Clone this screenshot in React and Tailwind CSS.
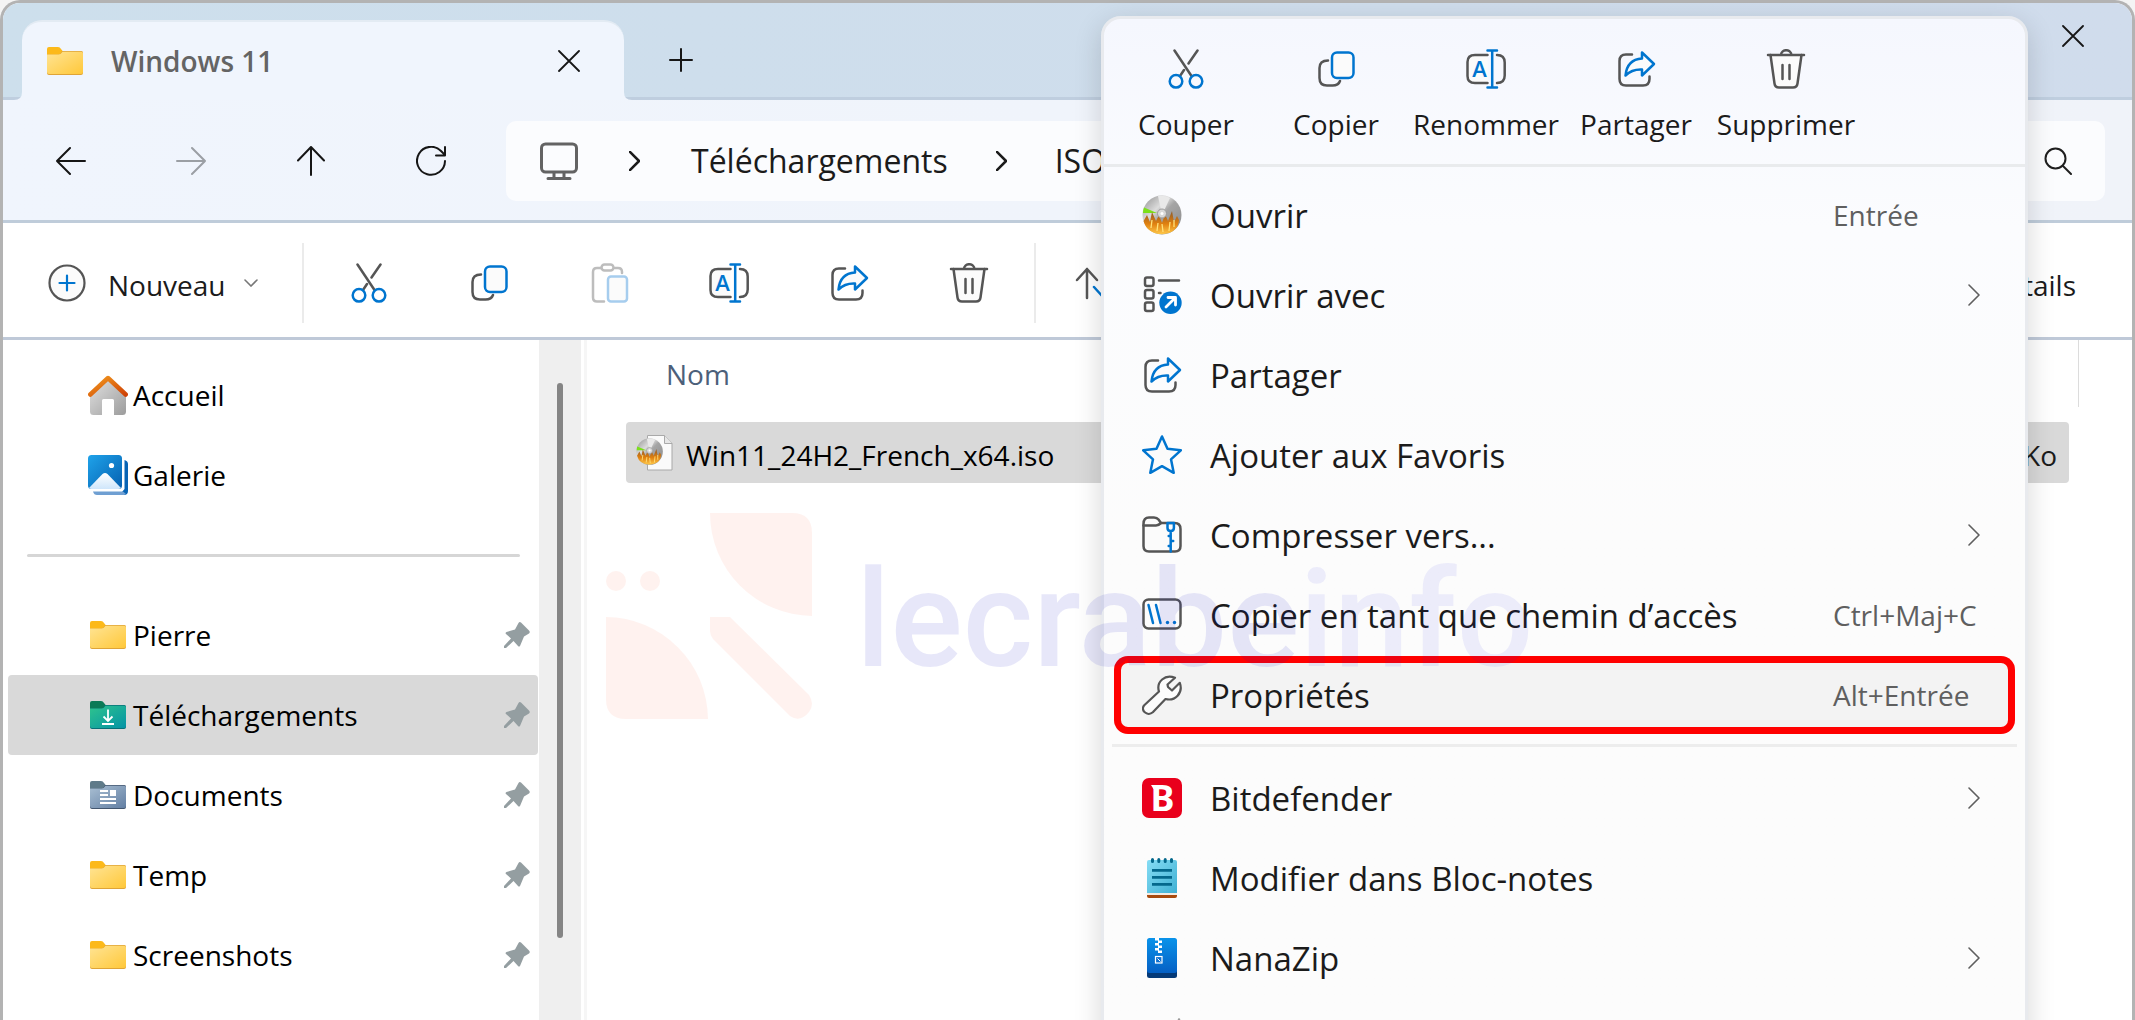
import React from 'react';

const GRAY = '#555555';
const BLUE = '#0075cf';

/* Line icons, shared by the command bar and the context menu */

function Icon({ children, className = 'size-10' }) {
  return (
    <svg viewBox="0 0 40 40" className={`${className} shrink-0`} fill="none" strokeWidth="2.5" strokeLinecap="round" strokeLinejoin="round" aria-hidden="true">
      {children}
    </svg>
  );
}

function CutIcon() {
  return (
    <Icon>
      <path stroke={GRAY} d="M8.5 1.5 25.5 27M31.5 1.5 22.5 14.5M18 21 14 27" />
      <circle cx="10" cy="32.3" r="6.3" stroke={BLUE} />
      <circle cx="30" cy="32.3" r="6.3" stroke={BLUE} />
    </Icon>
  );
}

function CopyIcon() {
  return (
    <Icon>
      <path stroke={GRAY} d="M12 11.5C6.500 11.5 3.500 13.500 3.500 19v10c0 5 2.500 7.500 7.500 7.500h5.500c4 0 6.500-1.500 7.500-4.500" />
      <rect x="16" y="3.500" width="21.500" height="25.500" rx="5" stroke={BLUE} fill="#fbfbfb" />
    </Icon>
  );
}

function PasteIcon() {
  return (
    <Icon>
      <path stroke="#bdbdbd" d="M12 5H8Q4 5 4 9v25.500q0 4 4 4h7M26 5h3q4 0 4 4v1" />
      <rect x="12.500" y="1.500" width="12" height="6" rx="3" stroke="#bdbdbd" />
      <rect x="19" y="13.500" width="19" height="25" rx="3" stroke="#a6cdee" fill="#fbfbfb" />
    </Icon>
  );
}

function RenameIcon() {
  return (
    <Icon>
      <path stroke={GRAY} fill="#fbfbfb" d="M21.500 6H9Q1.500 6 1.500 13v14Q1.500 34 9 34h12.500" />
      <path stroke={GRAY} d="M31 6q7.700 0 7.700 7.500v13Q38.700 34 31 34" />
      <path stroke={BLUE} d="M26.200 1.500v37M21.500 1.500h9.500M21.500 38.500h9.500" />
      <text x="13.500" y="27.500" textAnchor="middle" fontSize="22" fontWeight="600" fill={BLUE} className="font-['Open_Sans',sans-serif]">A</text>
    </Icon>
  );
}

function ShareIcon() {
  return (
    <Icon>
      <path stroke={GRAY} d="M16 5.500h-6Q3.500 5.500 3.500 12v18q0 6.500 6.500 6.500h17q6.500 0 6.500-6.500v-2.500" />
      <path stroke={BLUE} fill="#fbfbfb" d="M26 3.500 38 15 26 26.500v-6Q16 20 9.500 26.500 11 10.500 26 9.500Z" />
    </Icon>
  );
}

function TrashIcon() {
  return (
    <Icon>
      <path stroke={GRAY} fill="#fbfbfb" d="m4.500 6 4 28.500q.5 4 4.500 4h14q4 0 4.500-4l4-28.500" />
      <path stroke={GRAY} d="M2 6h36M15 6a5.200 4.800 0 0 1 10.400 0M16.500 16v14M23.500 16v14" />
    </Icon>
  );
}

function SortIcon() {
  return (
    <Icon>
      <path stroke={GRAY} d="M19 35V6M9 17 19 6l10 11" />
      <path stroke={BLUE} d="m26 24 9 10 9-10" />
    </Icon>
  );
}

function OpenWithIcon() {
  return (
    <Icon>
      <g stroke={GRAY}>
        <rect x="3" y="2.500" width="8.500" height="8.500" rx="2" />
        <rect x="3" y="15" width="8.500" height="8.500" rx="2" />
        <rect x="3" y="27.500" width="8.500" height="8.500" rx="2" />
        <path d="M17 5.500h20M17 18h1.500" />
      </g>
      <circle cx="28.500" cy="27.800" r="11.200" fill={BLUE} />
      <path stroke="#fff" strokeWidth="2.800" d="m24 32 9-9M26 22.500h7.500V30" />
    </Icon>
  );
}

function StarIcon() {
  return (
    <Icon>
      <path stroke={BLUE} fill="#fbfbfb" d="m20 1.500 5.500 12.300 13.300 1.500-9.800 9 2.700 13.500L20 31.200 8.300 37.800 11 24.300l-9.800-9 13.300-1.500Z" />
    </Icon>
  );
}

function CompressIcon() {
  return (
    <Icon>
      <path stroke={GRAY} fill="#fbfbfb" d="M1.500 9v22q0 5.500 5.500 5.500h26q5.500 0 5.500-5.500V14q0-6-6-6H19l-2.500-3.500Q15 2.500 12 2.500H7Q1.500 2.500 1.500 9Z" />
      <path stroke={GRAY} d="M1.500 10.500H14q2.500 0 5-2.500" />
      <path stroke={BLUE} d="M25.500 8v5q0 3 3.200 3t3.200-3V8ZM28.700 16v20.500M28.700 21h-2M28.700 26h2.500M28.700 31h-2" />
    </Icon>
  );
}

function PathIcon() {
  return (
    <Icon>
      <rect x="1.500" y="4.500" width="37" height="29" rx="5" stroke={GRAY} />
      <path stroke={BLUE} d="m6.500 10 4.500 18M14 10l4.500 18" />
      <circle cx="25.500" cy="27.500" r="1.700" fill={BLUE} />
      <circle cx="32.500" cy="27.500" r="1.700" fill={BLUE} />
    </Icon>
  );
}

function WrenchIcon() {
  return (
    <Icon>
      <path stroke={GRAY} strokeWidth="2.200" fill="#fcfcfc" d="M17 16.500C14 7 23-1.500 33 2.800L25.500 9.500 26 12 30 15.500 37.800 7.800C41.500 18 33 26.500 23.500 24L10.800 37.300C5.500 42-2.500 35 2.500 30Z" />
    </Icon>
  );
}

/* Coloured icons */

function DiscArt({ id }) {
  return (
    <>
      <defs>
        <linearGradient id={`${id}-disc`} x1="0" y1="0" x2="1" y2="1">
          <stop offset="0" stopColor="#8d8d8d" />
          <stop offset=".35" stopColor="#dcdcdc" />
          <stop offset=".5" stopColor="#a5a5a5" />
          <stop offset="1" stopColor="#8a8a8a" />
        </linearGradient>
        <linearGradient id={`${id}-fire`} x1="0" y1="0" x2="0" y2="1">
          <stop offset="0" stopColor="#8c5a2a" />
          <stop offset=".55" stopColor="#e0800f" />
          <stop offset="1" stopColor="#ffc94a" />
        </linearGradient>
      </defs>
      <circle cx="20" cy="20" r="19.500" fill={`url(#${id}-disc)`} />
      <path fill="#e9e9e9" d="M20 20 16 1Q24 0 28 3Z" />
      <path fill="#7be01a" d="M15 18 2 12.500Q1 15 1 18Z" />
      <path fill={`url(#${id}-fire)`} d="M1.500 26 5 20l3 7 2-10 4 9 3-6 3 8 3-9 3 7 4-10 2 11 3-6 2 4Q36 38 20 39.300 5 38.500 1.500 26Z" />
      <path stroke="#ffe27a" strokeWidth="1.300" fill="none" d="m9 33 1-8M15 36l1-8M21 37l-1-8M27 36l1-9M32 32v-7" />
      <circle cx="20" cy="18.500" r="4.500" fill="#d8d8d8" stroke="#9a9a9a" strokeWidth="1" />
      <circle cx="20" cy="18.500" r="1.500" fill="#fff" />
    </>
  );
}

function DiscIcon() {
  return (
    <svg viewBox="0 0 40 40" className="size-10 shrink-0" aria-hidden="true">
      <DiscArt id="menu" />
    </svg>
  );
}

function IsoFileIcon() {
  return (
    <svg viewBox="0 0 37 37" className="size-[37px] shrink-0" aria-hidden="true">
      <path fill="#fafafa" stroke="#a9a9a9" d="M11.500 1.500h17l7.500 8V36H11.500Z" />
      <path fill="#e6e6e6" stroke="#a9a9a9" d="M28.500 1.500v8H36" />
      <g transform="translate(0 4) scale(.68)"><DiscArt id="file" /></g>
    </svg>
  );
}

function BitdefenderIcon() {
  return (
    <svg viewBox="0 0 40 40" className="size-10 shrink-0" aria-hidden="true">
      <rect width="40" height="40" rx="7" fill="#e9001c" />
      <text x="20.500" y="32.500" textAnchor="middle" fontSize="36" fontWeight="700" fill="#fff" className="font-['Noto_Sans',sans-serif]">B</text>
      <path fill="#fff" d="M9 7h6v4h-3.500Z" />
    </svg>
  );
}

function NotepadIcon() {
  return (
    <svg viewBox="0 0 40 40" className="size-10 shrink-0" aria-hidden="true">
      <defs>
        <linearGradient id="pad" x1="0" y1="0" x2="1" y2="1">
          <stop offset="0" stopColor="#86ddf5" />
          <stop offset="1" stopColor="#3fb0d3" />
        </linearGradient>
      </defs>
      <rect x="5" y="30" width="30" height="10" rx="2" fill="#a84a0e" />
      <path fill="#f3ece4" d="M5 30h30v7H5Z" />
      <path fill="url(#pad)" d="M7 2h26q2 0 2 2v31H5V4q0-2 2-2Z" />
      <path stroke="#04688c" strokeWidth="3" strokeLinecap="round" d="M10.500 1.500v2M16.800 1.500v2M23.200 1.500v2M29.500 1.500v2" />
      <path stroke="#04688c" strokeWidth="2.800" d="M10 12.300h20M10 19.300h20M10 26.300h20" />
    </svg>
  );
}

function NanaZipIcon() {
  return (
    <svg viewBox="0 0 40 40" className="size-10 shrink-0" aria-hidden="true">
      <defs>
        <linearGradient id="zip" x1="0" y1="0" x2="0" y2="1">
          <stop offset="0" stopColor="#0a93ea" />
          <stop offset="1" stopColor="#0560c4" />
        </linearGradient>
      </defs>
      <rect x="5" y="20" width="30" height="20" rx="2.500" fill="#053a78" />
      <rect x="5" y="0" width="30" height="35" rx="2.500" fill="url(#zip)" />
      <path fill="#fff" d="M13 0h4v2.500h3V5h-3v2.500h3V10h-3v2.500h3V15h-4v-2.500h-3V10h3V7.500h-3V5h3V2.500h-3Z" />
      <rect x="13.500" y="18.500" width="6.500" height="6.500" fill="#0a6fd0" stroke="#fff" strokeWidth="1.200" />
      <path stroke="#fff" strokeWidth="1" d="m15.500 20.500 3 3" />
    </svg>
  );
}

function PaintIcon() {
  return (
    <Icon>
      <path stroke="#9a9a9a" d="M37 1.500V8" />
    </Icon>
  );
}

function HomeIcon() {
  return (
    <svg viewBox="0 0 40 40" className="size-10 shrink-0" aria-hidden="true">
      <defs>
        <linearGradient id="wall" x1="0" y1="0" x2="1" y2="1">
          <stop offset="0" stopColor="#e2e2e2" />
          <stop offset="1" stopColor="#9c9c9c" />
        </linearGradient>
        <linearGradient id="roof" x1="0" y1="0" x2="1" y2="1">
          <stop offset="0" stopColor="#f29a1f" />
          <stop offset="1" stopColor="#cf4205" />
        </linearGradient>
      </defs>
      <path fill="url(#wall)" d="M20 4 38 21v15.500q0 3.500-3.500 3.500H26V25.500q0-1.500-1.500-1.500h-9q-1.500 0-1.500 1.500V40H5.500Q2 40 2 36.500V21Z" />
      <path fill="none" stroke="url(#roof)" strokeWidth="4.500" strokeLinecap="round" strokeLinejoin="round" d="M2.300 19.500 20 3l17.700 16.500" />
    </svg>
  );
}

function GalleryIcon() {
  return (
    <svg viewBox="0 0 40 40" className="size-10 shrink-0" aria-hidden="true">
      <defs>
        <linearGradient id="photo" x1="0" y1="0" x2="1" y2="1">
          <stop offset="0" stopColor="#1fa3ea" />
          <stop offset="1" stopColor="#0560b0" />
        </linearGradient>
        <linearGradient id="hill" x1="0" y1="0" x2="0" y2="1">
          <stop offset="0" stopColor="#fff" />
          <stop offset="1" stopColor="#cfe6fb" />
        </linearGradient>
      </defs>
      <path fill="#0864b4" d="M36.500 5q3.500 1 3.500 4v27q0 4-4 4l-2-3 2.500-3Z" />
      <path fill="#6f9fd2" d="M5 36.500h30l3 2.500q-1 1-3 1H9q-3 0-4-3.500Z" />
      <rect x="0" y="0" width="34" height="34" rx="3.500" fill="url(#photo)" />
      <path fill="url(#hill)" d="M1 33 14.500 19q2.500-2 5 0L33 33q-1 1-2.500 1h-27Q2 34 1 33Z" />
      <circle cx="23.500" cy="10.500" r="2.600" fill="#fff" />
    </svg>
  );
}

const FOLDER_COLORS = {
  yellow: { tab: '#fcb91a', from: '#ffe494', to: '#ffc83a', edge: '#dfa437' },
  green: { tab: '#0a7a56', from: '#2fc48d', to: '#0493a5', edge: '#077077' },
  slate: { tab: '#5f7a89', from: '#a9bfd3', to: '#637fa3', edge: '#43566f' },
};

function FolderIcon({ color = 'yellow', id }) {
  const c = FOLDER_COLORS[color];
  return (
    <svg viewBox="0 0 36 28" className="h-7 w-9 shrink-0" aria-hidden="true">
      <defs>
        <linearGradient id={id} x1="0" y1="0" x2="1" y2="1">
          <stop offset="0" stopColor={c.from} />
          <stop offset="1" stopColor={c.to} />
        </linearGradient>
      </defs>
      <path fill={c.tab} d="M0 2q0-2 2-2h9q2 0 3 2l2 2.500V8H0Z" />
      <path fill={c.edge} d="M15 4h19.500Q36 4 36 5.500V26q0 2-2 2H2q-2 0-2-2V7.500h11Q13.500 7.500 15 4Z" />
      <path fill={`url(#${id})`} d="M15.500 4.800h19Q36 4.800 36 6.500V25q0 2-2 2H2q-2 0-2-2V7.500h11.500q2.500 0 4-2.700Z" />
      {color === 'green' && (
        <path stroke="#fff" strokeWidth="1.800" fill="none" d="M18 8.500v11M13.500 15.500 18 20l4.500-4.500M12 23h12" />
      )}
      {color === 'slate' && (
        <>
          <path stroke="#fff" strokeWidth="1.900" d="M10 10h8M10 14h8M10 18h16M10 22h16" />
          <path fill="#fff" d="M20 9h6v6h-6Z" />
        </>
      )}
    </svg>
  );
}

function PinIcon() {
  return (
    <svg viewBox="0 0 26 26" className="size-[26px] shrink-0" aria-hidden="true">
      <path fill="#949ea1" d="M14.500 1q1-1.500 2.500-.5l8 8q1.500 1.500 0 3l-5 3-4 9.500q-1 1-2 0l-4.500-5L2 26H0v-2l7-7.500-5-4.500q-1-1 .5-2L11 7.500Z" />
    </svg>
  );
}

function Chevron({ className }) {
  return (
    <svg viewBox="0 0 12 22" className={className} fill="none" stroke="currentColor" strokeLinecap="round" strokeLinejoin="round" aria-hidden="true">
      <path d="M1 1 11 11 1 21" />
    </svg>
  );
}

function NavIcon({ d }) {
  return (
    <svg viewBox="0 0 30 30" className="size-[30px]" fill="none" stroke="currentColor" strokeWidth="2" strokeLinecap="round" strokeLinejoin="round" aria-hidden="true">
      <path d={d} />
    </svg>
  );
}

function CloseIcon() {
  return (
    <svg viewBox="0 0 22 22" className="size-[22px]" fill="none" stroke="#161616" strokeWidth="1.800" strokeLinecap="round" aria-hidden="true">
      <path d="M1 1 21 21M21 1 1 21" />
    </svg>
  );
}

/* Data */

const NAV_BUTTONS = [
  { label: 'Précédent', d: 'M29 15H1M14 2 1 15l13 13' },
  { label: 'Suivant', d: 'M1 15h28M16 2l13 13-13 13', disabled: true },
  { label: 'Monter', d: 'M15 29V1M2 14.500 15 1l13 13.500' },
  { label: 'Actualiser', d: 'M29 15a14 14 0 1 1-4-10l4 4M29 1v8.500h-9' },
];

const TOOLBAR = [
  { label: 'Couper', Glyph: CutIcon },
  { label: 'Copier', Glyph: CopyIcon },
  { label: 'Coller', Glyph: PasteIcon, disabled: true },
  { label: 'Renommer', Glyph: RenameIcon },
  { label: 'Partager', Glyph: ShareIcon },
  { label: 'Supprimer', Glyph: TrashIcon },
];

const QUICK_ACCESS = [
  { name: 'Pierre', color: 'yellow' },
  { name: 'Téléchargements', color: 'green', active: true },
  { name: 'Documents', color: 'slate' },
  { name: 'Temp', color: 'yellow' },
  { name: 'Screenshots', color: 'yellow' },
];

const MENU_ITEMS = [
  { label: 'Ouvrir', Glyph: DiscIcon, shortcut: 'Entrée' },
  { label: 'Ouvrir avec', Glyph: OpenWithIcon, submenu: true },
  { label: 'Partager', Glyph: ShareIcon },
  { label: 'Ajouter aux Favoris', Glyph: StarIcon },
  { label: 'Compresser vers...', Glyph: CompressIcon, submenu: true },
  { label: 'Copier en tant que chemin d’accès', Glyph: PathIcon, shortcut: 'Ctrl+Maj+C' },
  { label: 'Propriétés', Glyph: WrenchIcon, shortcut: 'Alt+Entrée', highlighted: true },
];

const APP_ITEMS = [
  { label: 'Bitdefender', Glyph: BitdefenderIcon, submenu: true },
  { label: 'Modifier dans Bloc-notes', Glyph: NotepadIcon },
  { label: 'NanaZip', Glyph: NanaZipIcon, submenu: true },
  { label: 'Éditer', Glyph: PaintIcon },
];

/* Window parts */

function TitleBar() {
  return (
    <header className="flex h-[97px] shrink-0 border-b-[3px] border-[#bfcedf] bg-linear-to-r from-[#cddfec] to-[#d0dcec]">
      <div className="relative mt-[17px] -mb-[3px] ml-[19px] flex w-[602px] items-center rounded-t-[20px] border-t-2 border-[#e3ebf3] bg-[#f0f5fd] pr-11 pl-[25px]">
        <FolderIcon id="tab-folder" />
        <span className="ml-7 flex-1 text-[28px] font-semibold text-[#646464]">Windows 11</span>
        <button aria-label="Fermer l’onglet"><CloseIcon /></button>
        <svg viewBox="0 0 8 8" className="absolute bottom-0 -left-2 size-2" aria-hidden="true"><path fill="#f0f5fd" d="M8 0v8H0Q8 8 8 0Z" /></svg>
        <svg viewBox="0 0 8 8" className="absolute -right-2 bottom-0 size-2" aria-hidden="true"><path fill="#f0f5fd" d="M0 0v8h8Q0 8 0 0Z" /></svg>
      </div>
      <button aria-label="Nouvel onglet" className="mt-5 ml-[45px]">
        <svg viewBox="0 0 24 24" className="size-6" stroke="#161616" strokeWidth="2" strokeLinecap="round" aria-hidden="true">
          <path d="M12 1v22M1 12h22" />
        </svg>
      </button>
      <button aria-label="Fermer" className="mt-[22px] mr-12 ml-auto self-start"><CloseIcon /></button>
    </header>
  );
}

function NavBar() {
  return (
    <nav className="flex shrink-0 border-b-[3px] border-[#bfccda] bg-linear-to-r from-[#f0f5fd] to-[#f0f3f9] pt-[21px] pr-[27px] pb-[19px] pl-2">
      {NAV_BUTTONS.map(({ label, d, disabled }) => (
        <button key={label} aria-label={label} disabled={disabled} className="flex h-20 w-[120px] shrink-0 items-center justify-center text-[#161616] disabled:text-[#9b9fa4]">
          <NavIcon d={d} />
        </button>
      ))}
      <div className="ml-[15px] flex h-20 flex-1 items-center rounded-[10px] bg-[#fbfcfe] pl-[34px] text-[32px] text-[#1b1b1b]">
        <svg viewBox="0 0 38 38" className="size-[38px] shrink-0" fill="none" stroke="#636363" strokeWidth="3" strokeLinejoin="round" strokeLinecap="round" aria-hidden="true">
          <rect x="1.500" y="2" width="35" height="28" rx="4" />
          <path d="M14 31v5M24 31v5M8 36.500h22" />
        </svg>
        <Chevron className="mr-[51px] ml-[51px] h-5 w-[11px] stroke-[2.8]" />
        <a href="#telechargements">Téléchargements</a>
        <Chevron className="mr-[48px] ml-[48px] h-5 w-[11px] stroke-[2.8]" />
        <a href="#iso">ISO</a>
      </div>
      <label className="ml-4 flex h-20 w-[400px] items-center rounded-[10px] bg-[#fbfcfe] pr-[33px] pl-8">
        <input type="search" aria-label="Rechercher" className="min-w-0 flex-1 text-[28px] outline-none" />
        <svg viewBox="0 0 28 28" className="size-7" fill="none" stroke="#1f1f1f" strokeWidth="2" strokeLinecap="round" aria-hidden="true">
          <circle cx="11.500" cy="11.500" r="10" />
          <path d="m19 19 8 8" />
        </svg>
      </label>
    </nav>
  );
}

function Toolbar() {
  return (
    <div className="flex h-[117px] shrink-0 items-center border-b-[3px] border-[#bfc9d8] bg-white pt-1.5 text-[28px] text-[#1b1b1b]">
      <button className="mr-11 ml-[45px] flex items-center">
        <svg viewBox="0 0 38 38" className="size-[38px]" fill="none" strokeWidth="2.200" strokeLinecap="round" aria-hidden="true">
          <circle cx="19" cy="19" r="17.500" stroke={GRAY} fill="#fbfbfb" />
          <path stroke={BLUE} d="M19 11.500v15M11.500 19h15" />
        </svg>
        <span className="ml-[22px] pt-1">Nouveau</span>
        <svg viewBox="0 0 14 8" className="ml-[18px] h-2 w-3.5" fill="none" stroke="#777" strokeWidth="1.600" strokeLinecap="round" aria-hidden="true">
          <path d="m1 1 6 6 6-6" />
        </svg>
      </button>
      <div className="h-20 w-0.5 bg-[#ebebeb]" />
      <div className="flex pl-[5px]">
        {TOOLBAR.map(({ label, Glyph, disabled }) => (
          <button key={label} aria-label={label} disabled={disabled} className="flex w-[120px] justify-center"><Glyph /></button>
        ))}
      </div>
      <div className="ml-[5px] h-20 w-0.5 bg-[#ebebeb]" />
      <button aria-label="Trier" className="ml-8"><SortIcon /></button>
      <button className="mr-14 ml-auto pt-1">Détails</button>
    </div>
  );
}

function SidebarRow({ icon, label, pinned, active }) {
  return (
    <a href="#" className={`flex h-20 items-center rounded-sm pr-2 pl-20 ${active ? 'bg-[#d9d9d9]' : ''}`}>
      <span className="mr-[5px] flex w-10 justify-center">{icon}</span>
      <span className="flex-1">{label}</span>
      {pinned && <PinIcon />}
    </a>
  );
}

function Sidebar() {
  return (
    <aside className="flex shrink-0 text-[28px] text-black">
      <div className="w-[536px] pt-[15px] pr-px pl-[5px]">
        <SidebarRow icon={<HomeIcon />} label="Accueil" />
        <SidebarRow icon={<GalleryIcon />} label="Galerie" />
        <div className="flex h-20 items-center pr-[18px] pl-[19px]">
          <div className="h-[3px] flex-1 rounded-full bg-[#d6d6d6]" />
        </div>
        {QUICK_ACCESS.map(({ name, color, active }) => (
          <SidebarRow key={name} icon={<FolderIcon color={color} id={`folder-${name}`} />} label={name} active={active} pinned />
        ))}
      </div>
      <div className="flex w-[42px] justify-center bg-[#efefef] pt-[43px] pb-[82px]">
        <div className="w-1.5 rounded-full bg-[#858585]" />
      </div>
      <div className="ml-[3px] w-[3px] bg-[#f6f6f6]" />
    </aside>
  );
}

function FileList() {
  return (
    <section className="min-w-0 flex-1 pr-[53px] pl-[39px] text-[28px]">
      <table className="w-full border-collapse text-left">
        <thead>
          <tr className="text-[#4c607a]">
            <th className="h-[82px] p-0 pt-[13px] pl-10 align-top font-normal">Nom</th>
            <th className="w-[300px] p-0 font-normal" />
            <th className="w-2.5 p-0 align-top"><div className="h-[67px] border-r border-[#dcdcdc]" /></th>
          </tr>
        </thead>
        <tbody>
          <tr className="h-[61px] text-black">
            <td className="rounded-l-sm bg-[#d9d9d9] p-0 pl-2.5">
              <div className="flex items-center gap-[13px]">
                <IsoFileIcon />
                <span className="pt-1">Win11_24H2_French_x64.iso</span>
              </div>
            </td>
            <td className="rounded-r-sm bg-[#d9d9d9] p-0 pt-1 pr-3 text-right text-[#1b1b1b]">Ko</td>
            <td className="p-0" />
          </tr>
        </tbody>
      </table>
    </section>
  );
}

function MenuItem({ label, Glyph, shortcut, submenu, highlighted }) {
  return (
    <button role="menuitem" className={`flex shrink-0 items-center pl-7 text-left ${highlighted ? 'my-px h-[78px] rounded-[14px] bg-[#f3f3f3] shadow-[inset_0_0_0_7px_#ff0000]' : 'h-20'}`}>
      <Glyph />
      <span className="ml-7 flex-1 pt-0.5 text-[33px]">{label}</span>
      <span className="flex w-[182px] items-center text-[28px] text-[#5f5f5f]">
        {shortcut}
        {submenu && <Chevron className="mr-[35px] ml-auto h-[22px] w-3 stroke-[1.6]" />}
      </span>
    </button>
  );
}

function ContextMenu() {
  return (
    <div role="menu" className="absolute top-4 right-[107px] -bottom-10 left-[1101px] overflow-hidden rounded-t-[20px] border-[3px] border-[#e8eaee] bg-linear-to-b from-[#f5f7fe] via-[#fbfcfe] via-20% to-[#fcfcfc] to-50% text-[#1b1b1b] shadow-[0_8px_28px_rgba(0,0,0,0.16)]">
      <div className="flex border-b-[3px] border-[#e9ebed] pt-[30px] pb-5 pl-[7px]">
        {TOOLBAR.filter((item) => !item.disabled).map(({ label, Glyph }) => (
          <button key={label} role="menuitem" className="flex w-[150px] flex-col items-center gap-[15px] text-[28px] leading-10">
            <Glyph />
            {label}
          </button>
        ))}
      </div>
      <div className="flex flex-col px-2.5 pt-2">
        {MENU_ITEMS.map((item) => <MenuItem key={item.label} {...item} />)}
      </div>
      <hr className="mx-2 mt-[9px] mb-[11px] border-t-[3px] border-[#ededed]" />
      <div className="flex flex-col px-2.5">
        {APP_ITEMS.map((item) => <MenuItem key={item.label} {...item} />)}
      </div>
    </div>
  );
}

function Watermark() {
  return (
    <div className="pointer-events-none absolute top-[513px] left-[606px] flex items-start">
      <svg viewBox="0 0 206 207" className="h-[207px] w-[206px]" fill="#ff5a32" fillOpacity=".08" aria-hidden="true">
        <path d="M104 0h82q20 0 20 20v83A103 103 0 0 1 104 0Z" />
        <circle cx="10" cy="68" r="10" />
        <circle cx="44" cy="68" r="10" />
        <path d="M0 104a103 103 0 0 1 102 102H20Q0 206 0 186Z" />
        <path d="M104 104h20l79 78q6 9 0 17-9 11-19 4l-77-77q-3-4-3-8Z" />
      </svg>
      <span className="mt-10 ml-11 font-['Roboto',sans-serif] text-[135px] leading-none font-medium text-[#1414c8]/10">
        lecrabe<span className="text-[#1e1ee0]/7">info</span>
      </span>
    </div>
  );
}

export default function App() {
  return (
    <main className="relative h-screen overflow-hidden bg-[#f4f4f4] font-['Open_Sans','Noto_Sans',sans-serif]">
      <div className="flex h-full flex-col overflow-hidden rounded-t-[20px] border-x-[3px] border-t-[3px] border-[#b3b3b3] bg-white">
        <TitleBar />
        <NavBar />
        <Toolbar />
        <div className="flex min-h-0 flex-1">
          <Sidebar />
          <FileList />
        </div>
      </div>
      <ContextMenu />
      <Watermark />
    </main>
  );
}
